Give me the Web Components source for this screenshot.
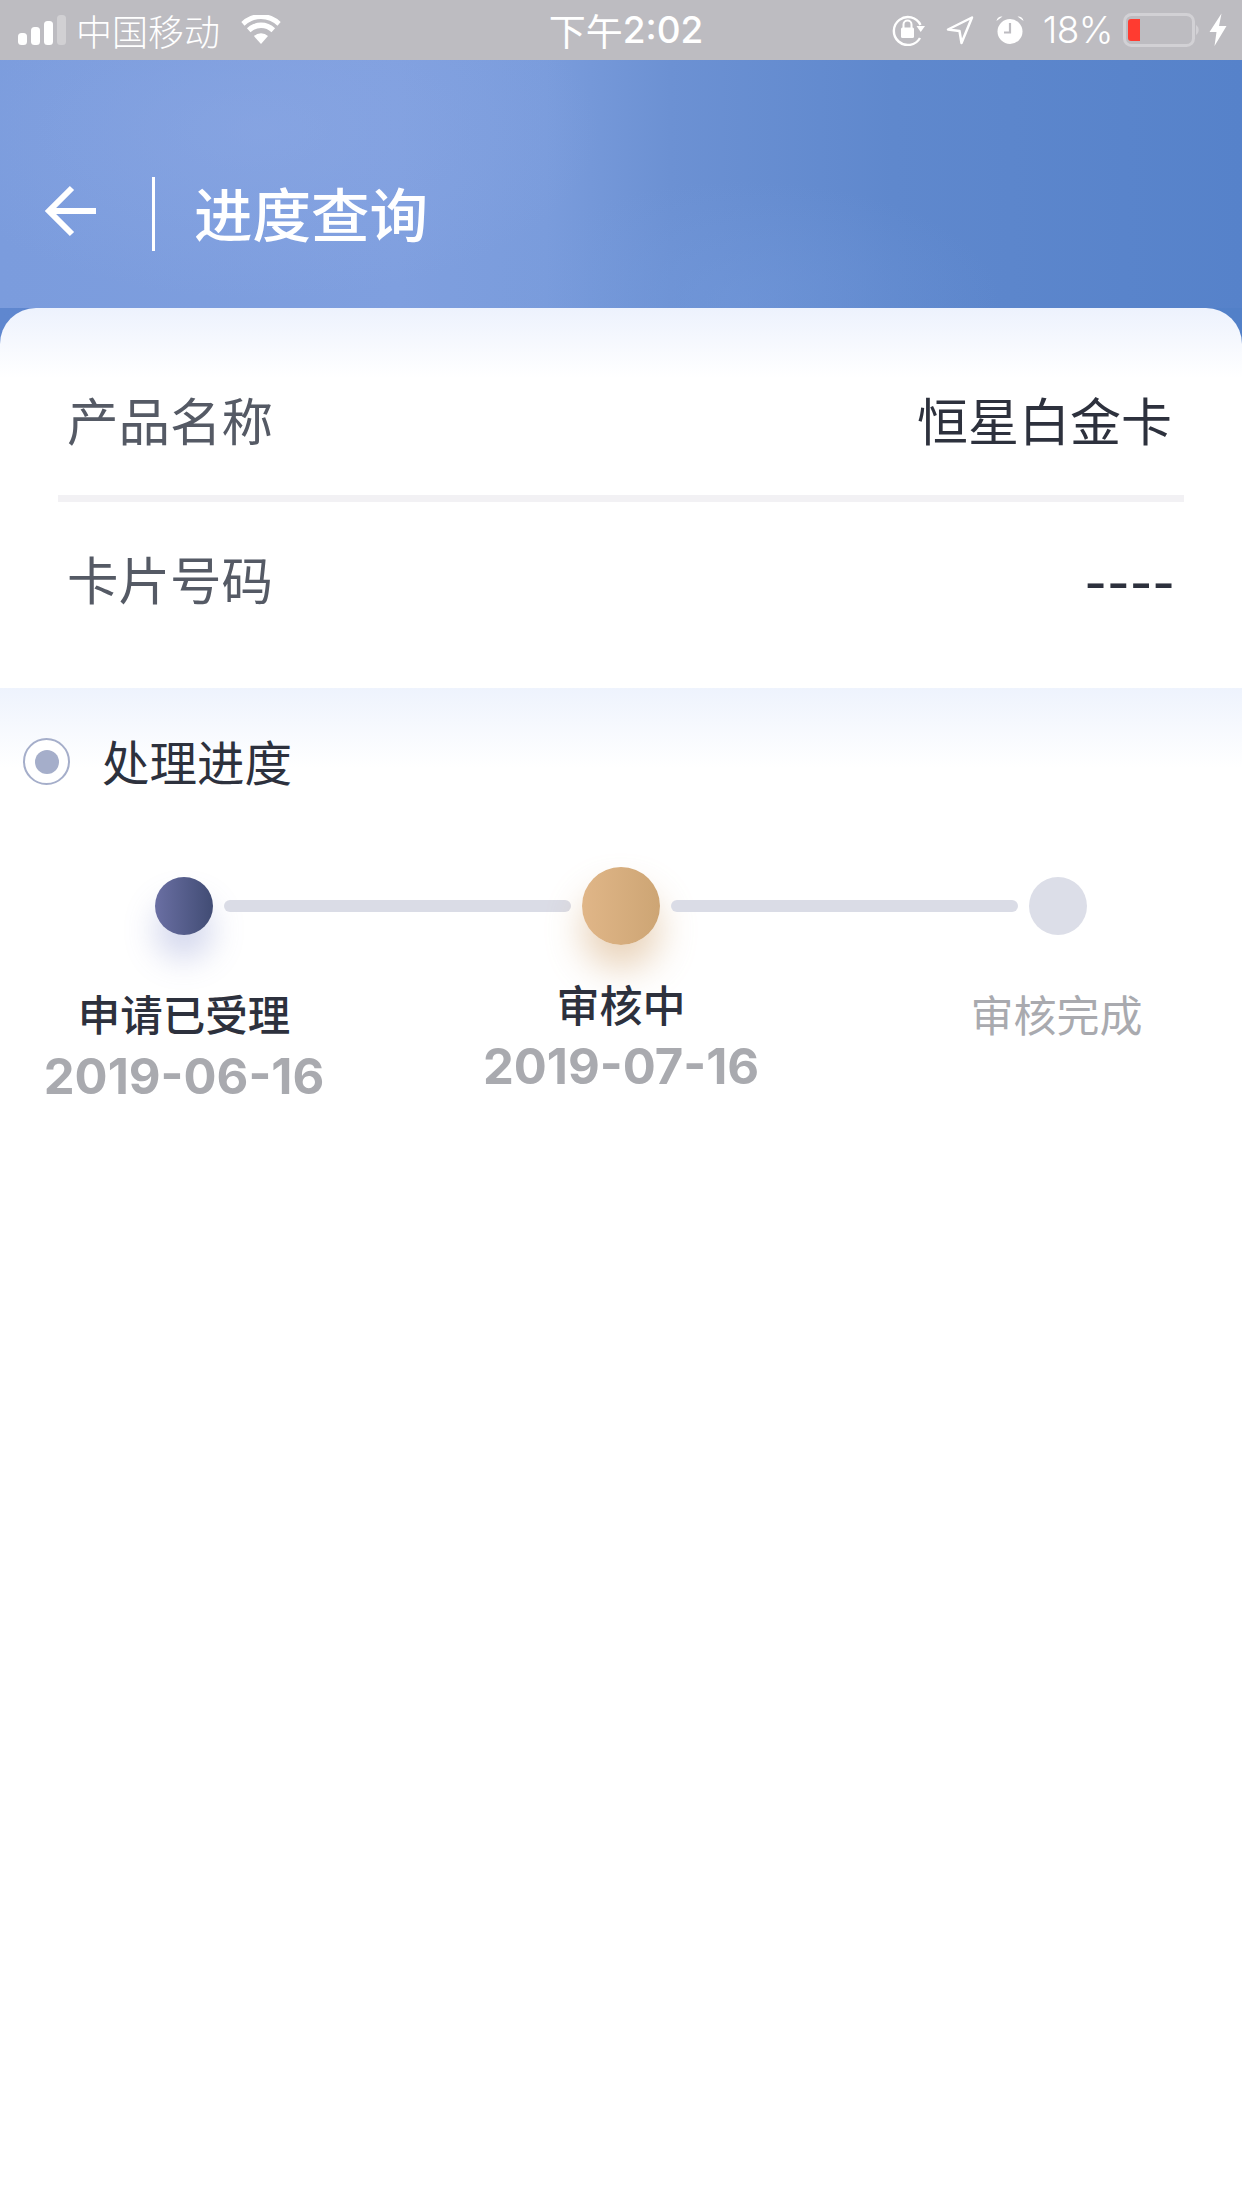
<!DOCTYPE html>
<html lang="zh">
<head>
<meta charset="utf-8">
<title>进度查询</title>
<style>
  html, body { margin: 0; padding: 0; background: #fff; }
  body { width: 1242px; height: 2208px; overflow: hidden; font-family: "Noto Sans CJK SC", "Liberation Sans", sans-serif; }
</style>
</head>
<body>
<app-page>
  <status-bar></status-bar>
  <nav-header>进度查询</nav-header>
  <info-card>
    <info-row label="产品名称" value="恒星白金卡"></info-row>
    <info-row label="卡片号码" value="----" dashed></info-row>
  </info-card>
  <progress-section title="处理进度">
    <progress-step state="done" label="申请已受理" date="2019-06-16"></progress-step>
    <step-bar></step-bar>
    <progress-step state="current" label="审核中" date="2019-07-16"></progress-step>
    <step-bar></step-bar>
    <progress-step state="todo" label="审核完成"></progress-step>
  </progress-section>
</app-page>

<script>
const CJK = '"Noto Sans CJK SC", "Liberation Sans", sans-serif';
const LATIN = '"Inter", "Liberation Sans", sans-serif';

class AppPage extends HTMLElement {
  constructor() {
    super();
    this.attachShadow({ mode: 'open' }).innerHTML = `
      <style>
        :host { display: flex; flex-direction: column; width: 1242px; height: 2208px; background: #fff; font-family: ${CJK}; }
      </style>
      <slot></slot>`;
  }
}

class StatusBar extends HTMLElement {
  constructor() {
    super();
    this.attachShadow({ mode: 'open' }).innerHTML = `
      <style>
        :host { display: grid; grid-template-columns: 1fr auto 1fr; align-items: center; height: 60px; background: #bdbcc1; color: #fff; font-family: ${CJK}; }
        .left, .right { display: flex; align-items: center; }
        .left { padding-left: 18px; }
        .right { justify-content: flex-end; padding-right: 15px; }
        .carrier { font-size: 36px; line-height: 60px; margin-left: 10px; font-weight: 300; }
        .wifi { margin-left: 20px; }
        .time { font-family: ${LATIN}; font-weight: 500; font-size: 37px; line-height: 60px; display: flex; padding-left: 10px; }
        .time span { font-family: ${CJK}; font-weight: 400; }
        .pct { font-family: ${LATIN}; font-weight: 300; font-size: 37px; line-height: 60px; margin: 0 10px 0 18px; letter-spacing: -.5px; }
        svg { display: block; }
      </style>
      <div class="left">
        <svg width="48" height="32" viewBox="0 0 48 32">
          <rect x="0" y="19" width="9" height="12" rx="3.5" fill="#fff"/>
          <rect x="13" y="13" width="9" height="18" rx="3.5" fill="#fff"/>
          <rect x="26" y="7" width="9" height="24" rx="3.5" fill="#fff"/>
          <rect x="39" y="1" width="9" height="30" rx="3.5" fill="#fff" opacity=".3"/>
        </svg>
        <div class="carrier">中国移动</div>
        <svg class="wifi" width="42" height="30" viewBox="0 0 42 32">
          <path d="M21 31 L13.5 22.5 A11 11 0 0 1 28.500 22.500 Z" fill="#fff"/>
          <path d="M9.800 18.500 L6 14.200 A21.500 21.500 0 0 1 36 14.200 L32.200 18.500 A16 16 0 0 0 9.800 18.500 Z" fill="#fff"/>
          <path d="M3.400 11.400 L0 7.500 A30 30 0 0 1 42 7.500 L38.600 11.400 A25 25 0 0 0 3.400 11.400 Z" fill="#fff"/>
        </svg>
      </div>
      <div class="time"><span>下午</span>2:02</div>
      <div class="right">
        <svg width="34" height="32" viewBox="0 0 34 32" fill="none" stroke="#fff">
          <path d="M28 24 A14 14 0 1 1 28.500 11" stroke-width="2.400"/>
          <path d="M33 12 L24.500 12 L28.700 18 Z" fill="#fff" stroke="none"/>
          <rect x="9" y="13.500" width="13" height="10.500" rx="1.500" fill="#fff" stroke="none"/>
          <path d="M11.500 14 V10.500 A4 4 0 0 1 19.500 10.500 V14" stroke-width="2"/>
        </svg>
        <svg style="margin-left:20px" width="28" height="30" viewBox="0 0 28 30" fill="none">
          <path d="M26 2.500 L2 14.500 L13.500 16 L15.500 28 Z" stroke="#fff" stroke-width="2.500" stroke-linejoin="round"/>
        </svg>
        <svg style="margin-left:21px" width="30" height="32" viewBox="0 0 30 32">
          <circle cx="15" cy="17.500" r="12.500" fill="#fff"/>
          <path d="M15 9 V18.500 H9" fill="none" stroke="#bdbcc1" stroke-width="2.200"/>
          <path d="M1.500 7 A5 5 0 0 1 7.500 2.500 Z M28.500 7 A5 5 0 0 0 22.500 2.500 Z" fill="#fff"/>
        </svg>
        <div class="pct">18%</div>
        <svg width="77" height="34" viewBox="0 0 77 34">
          <rect x="1.500" y="1.500" width="69" height="31" rx="7" fill="none" stroke="#d2d1d5" stroke-width="3"/>
          <path d="M5 9 A3 3 0 0 1 8 6 H17 V28 H8 A3 3 0 0 1 5 25 Z" fill="#ff3b30"/>
          <path d="M73 12 A6 6 0 0 1 73 22 Z" fill="#d2d1d5"/>
        </svg>
        <svg style="margin-left:9px" width="18" height="34" viewBox="0 0 18 34">
          <path d="M12.500 0.500 L0.500 19 H7.500 L5.500 33 L17.500 13 H10 Z" fill="#fff"/>
        </svg>
      </div>`;
  }
}

class NavHeader extends HTMLElement {
  constructor() {
    super();
    this.attachShadow({ mode: 'open' }).innerHTML = `
      <style>
        :host { display: flex; align-items: center; box-sizing: border-box; height: 248px; padding: 60px 0 0 44px; color: #fff; font-family: ${CJK};
          background:
            radial-gradient(ellipse 340px 170px at 260px 70px, rgba(146,172,230,.4), rgba(146,172,230,0)),
            radial-gradient(ellipse 260px 120px at 740px 240px, rgba(118,156,222,.4), rgba(118,156,222,0)),
            linear-gradient(90deg, #7b9cdd 0, #7f9fdf 32%, #7a9cdc 44%, #6c91d3 54%, #5f88cd 72%, #5682ca 100%); }
        .back { display: block; margin-bottom: 6px; }
        .sep { width: 3px; height: 74px; background: #fff; margin: 0 39px 0 56px; }
        .title { font-size: 58.500px; font-weight: 500; line-height: 74px; margin-bottom: 4px; }
      </style>
      <svg class="back" width="52" height="52" viewBox="0 0 52 52" fill="none" stroke="#fff" stroke-width="6">
        <path d="M52 26 H5"/>
        <path d="M28 3 L5 26 L28 49"/>
      </svg>
      <div class="sep"></div>
      <div class="title"><slot></slot></div>`;
  }
}

class InfoCard extends HTMLElement {
  constructor() {
    super();
    this.attachShadow({ mode: 'open' }).innerHTML = `
      <style>
        :host { display: block; background: linear-gradient(90deg, #5f87cf, #5280c8); }
        .inner { box-sizing: border-box; height: 380px; border-radius: 36px 36px 0 0; padding: 76px 58px 75px;
          background: linear-gradient(180deg, #edf2fd 0, #fff 70px); }
        ::slotted(info-row:not(:last-child)) { border-bottom: 7px solid #f2f1f4; padding-bottom: 41px; margin-bottom: 41px; }
      </style>
      <div class="inner"><slot></slot></div>`;
  }
}

class InfoRow extends HTMLElement {
  constructor() {
    super();
    this.attachShadow({ mode: 'open' }).innerHTML = `
      <style>
        :host { display: flex; align-items: center; justify-content: space-between; font-family: ${CJK}; font-size: 51px; line-height: 70px; }
        .label { color: #555a65; padding-left: 9px; font-size: 51.500px; }
        .value { color: #2d313d; padding-right: 12px; }
        :host([dashed]) .value { font-family: ${LATIN}; font-size: 49px; font-weight: 500; line-height: 58px; padding: 12px 9px 0 0; }
      </style>
      <span class="label"></span>
      <span class="value"></span>`;
  }
  connectedCallback() {
    this.shadowRoot.querySelector('.label').textContent = this.getAttribute('label');
    this.shadowRoot.querySelector('.value').textContent = this.getAttribute('value');
  }
}

class ProgressSection extends HTMLElement {
  constructor() {
    super();
    this.attachShadow({ mode: 'open' }).innerHTML = `
      <style>
        :host { display: block; padding-top: 50px; font-family: ${CJK}; background: linear-gradient(180deg, #eef3fd 0, #fff 80px); }
        .head { display: flex; align-items: center; padding-left: 23px; height: 47px; color: #2d313d; font-size: 47.500px; }
        .dot { box-sizing: border-box; width: 47px; height: 47px; border-radius: 50%; border: 2px solid #a5aeca; display: flex; align-items: center; justify-content: center; margin-right: 32px; background: #fff; }
        .dot i { width: 24px; height: 24px; border-radius: 50%; background: #a5aeca; }
        .steps { display: grid; grid-template-columns: 58px 1fr 78px 1fr 58px; column-gap: 11px; padding: 0 155px; margin-top: 82px; }
        .title { margin-top: -2px; }
      </style>
      <div class="head"><div class="dot"><i></i></div><span class="title"></span></div>
      <div class="steps"><slot></slot></div>`;
  }
  connectedCallback() {
    this.shadowRoot.querySelector('.title').textContent = this.getAttribute('title');
  }
}

class StepBar extends HTMLElement {
  constructor() {
    super();
    this.attachShadow({ mode: 'open' }).innerHTML = `
      <style>
        :host { display: block; height: 12px; margin-top: 33px; border-radius: 6px; background: #dadce6; }
      </style>`;
  }
}

class ProgressStep extends HTMLElement {
  constructor() {
    super();
    this.attachShadow({ mode: 'open' }).innerHTML = `
      <style>
        :host { display: flex; flex-direction: column; align-items: center; font-family: ${CJK}; }
        .track { display: flex; align-items: center; justify-content: center; height: 78px; }
        .ball { width: 58px; height: 58px; border-radius: 50%; flex: none; }
        .label { font-size: 42.500px; line-height: 50px; margin-top: 43px; white-space: nowrap; }
        .date { font-family: ${LATIN}; font-weight: 700; font-size: 49px; line-height: 54px; color: #a9aaaf; margin-top: 12px; white-space: nowrap; }
        :host([state=done]) .ball { background: linear-gradient(90deg, #6a6fa3, #414c74); box-shadow: 0 24px 32px rgba(96,112,190,.28); }
        :host([state=done]) .label { color: #2d313d; font-weight: 500; }
        :host([state=current]) .ball { width: 78px; height: 78px; background: linear-gradient(90deg, #e0b688, #cda574); box-shadow: 0 24px 36px rgba(208,160,104,.46); }
        :host([state=current]) .label { color: #2d313d; font-weight: 500; font-size: 43px; margin-top: 33px; }
        :host([state=current]) .date { margin-top: 12px; }
        :host([state=todo]) .ball { background: #dcdee8; }
        :host([state=todo]) .label { color: #a9aaaf; font-size: 43px; margin-right: 3px; }
      </style>
      <div class="track"><div class="ball"></div></div>
      <div class="label"></div>
      <div class="date"></div>`;
  }
  connectedCallback() {
    this.shadowRoot.querySelector('.label').textContent = this.getAttribute('label');
    const date = this.getAttribute('date');
    const el = this.shadowRoot.querySelector('.date');
    if (date) el.textContent = date; else el.remove();
  }
}

customElements.define('app-page', AppPage);
customElements.define('status-bar', StatusBar);
customElements.define('nav-header', NavHeader);
customElements.define('info-card', InfoCard);
customElements.define('info-row', InfoRow);
customElements.define('progress-section', ProgressSection);
customElements.define('step-bar', StepBar);
customElements.define('progress-step', ProgressStep);
</script>
</body>
</html>
